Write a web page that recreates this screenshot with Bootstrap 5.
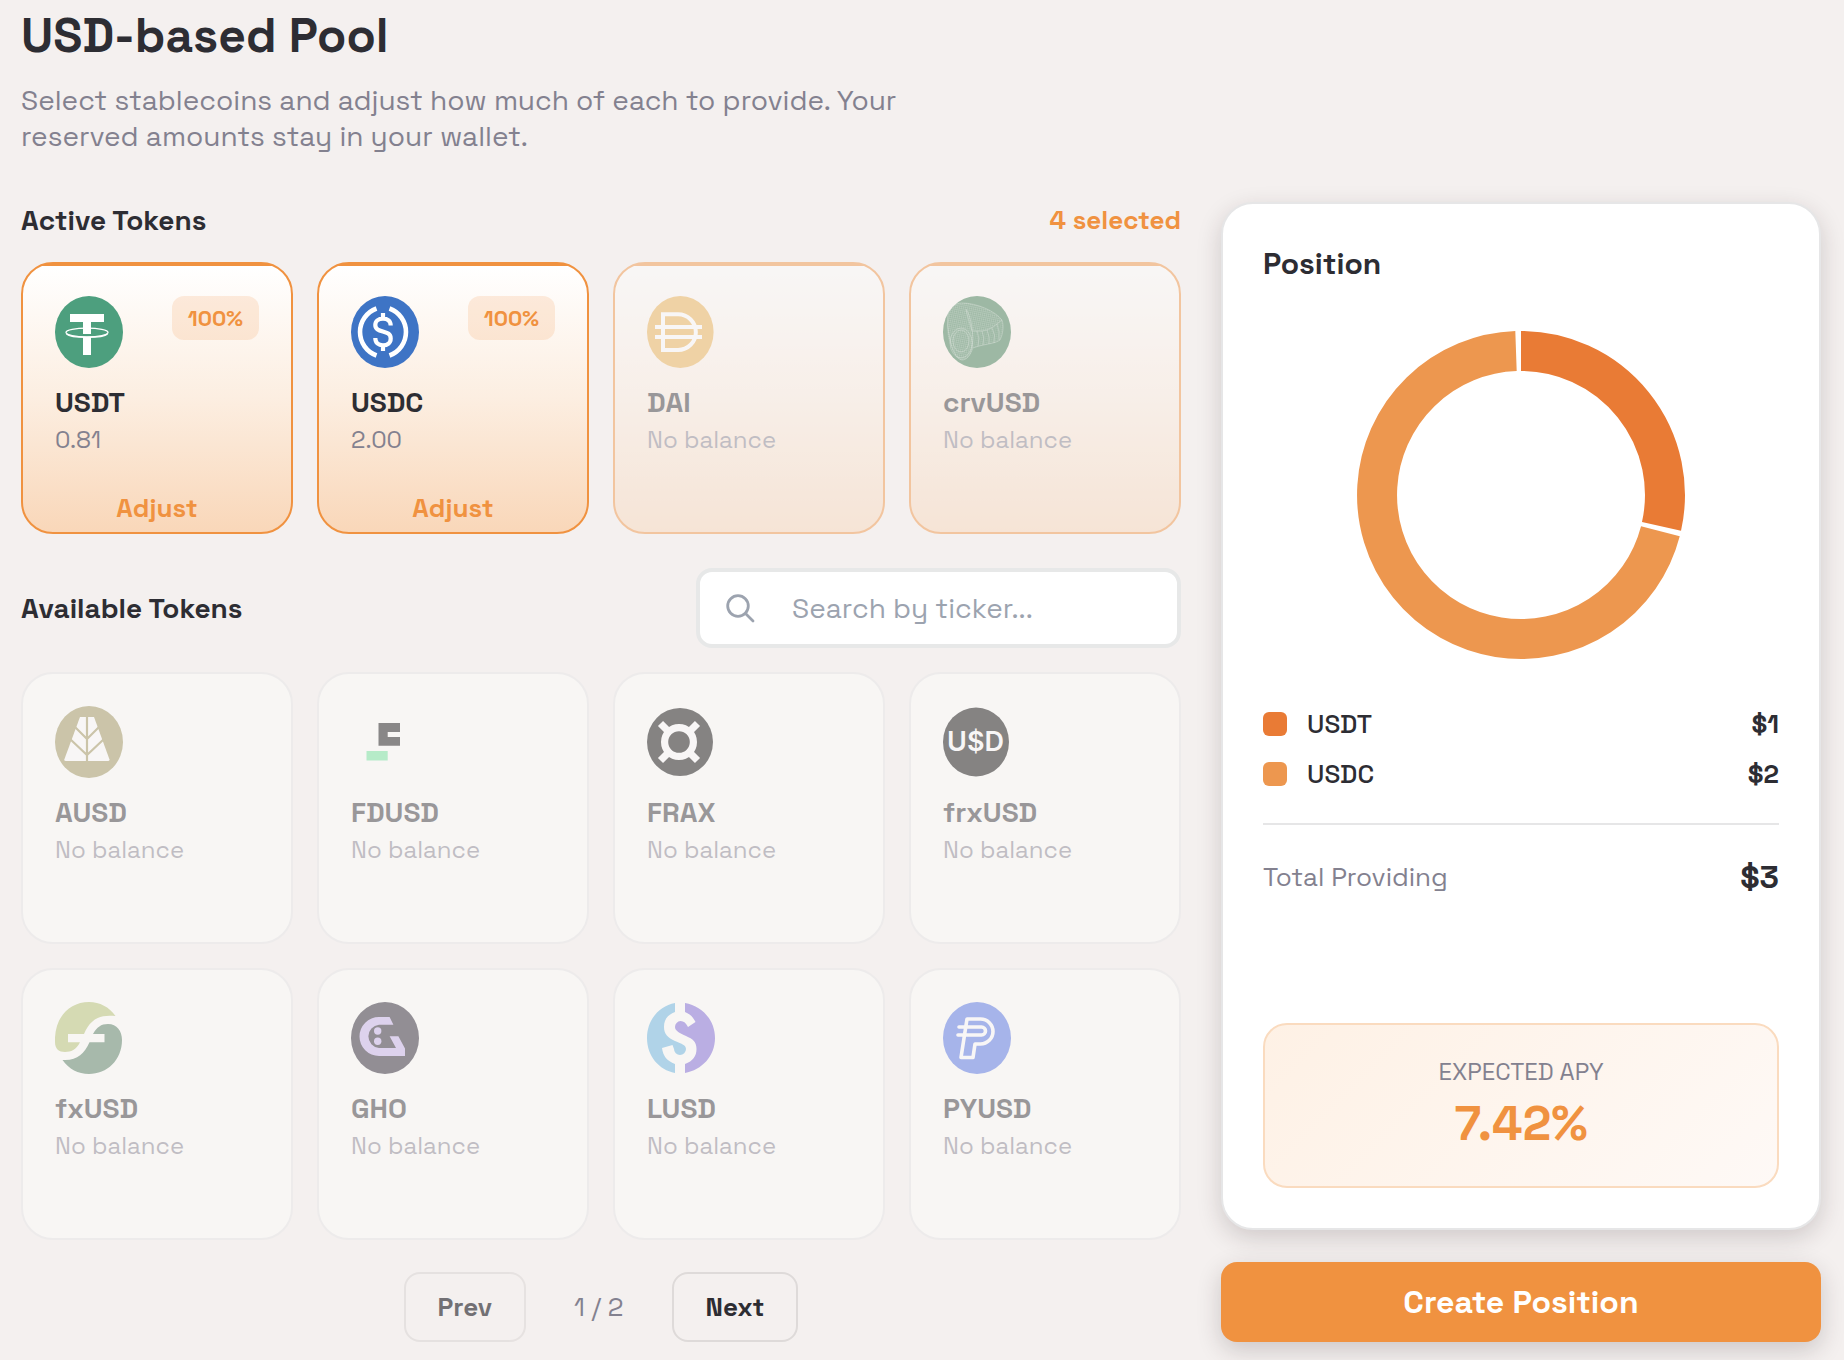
<!DOCTYPE html>
<html lang="en">
<head>
<meta charset="utf-8">
<meta name="viewport" content="width=device-width, initial-scale=1">
<title>USD-based Pool</title>
<link rel="stylesheet" href="https://cdn.jsdelivr.net/npm/bootstrap@5.3.0/dist/css/bootstrap.min.css">
<style>
:root{--ink:#2d2d33;--muted:#83818f;--accent:#f09240;--line:#e6e6e7}
body{background:#f4f0ef;color:var(--ink);font-family:"Space Grotesk",Inter,"Liberation Sans",sans-serif}
.page{padding:8px 23px 18px 21px}
.page-title{font-size:48px;line-height:56px;font-weight:700;margin-bottom:18px}
.intro{font-size:28px;line-height:36px;color:var(--muted);max-width:900px;margin-bottom:48px}
.layout{display:grid;grid-template-columns:minmax(0,1fr) minmax(0,600px);gap:40px}
.section-title{font-size:28px;line-height:36px;font-weight:600;margin:0}
.active-head{margin-bottom:24px}
.picked{font-size:26px;line-height:36px;font-weight:600;color:var(--accent)}
.tokens{display:grid;grid-template-columns:repeat(4,minmax(0,1fr));gap:24px}
.token{aspect-ratio:1;border:2px solid var(--line);border-radius:32px;background:#fdfffc;padding:32px 32px 6px;overflow:hidden}
.token.on{border-color:var(--accent);background:linear-gradient(var(--accent) 2px,#fff 2px,#fceee1 50%,#f9d7b9);background-origin:padding-box}
.token.off{opacity:.45}
.token-icon{width:68px;height:72px;display:block}
.pct{font-size:22px;line-height:44px;font-weight:600;color:var(--accent);background:rgba(240,146,64,.16);border-radius:12px;padding:0 16px}
.ticker{font-size:28px;line-height:36px;font-weight:600;margin:16px 0 4px}
.amount{font-size:24px;line-height:32px;color:var(--muted);margin:0}
.adjust{font-size:26px;line-height:36px;font-weight:700;color:var(--accent);background:none;border:0;padding:0}
.search-row{margin:34px 0 24px}
.search{width:485px;height:80px;border:4px solid #e7e8e8;border-radius:16px;background:#fff;padding-left:24px}
.search input{font-size:28px;color:var(--ink);background:none;padding:0 0 0 34px}
.search input::placeholder{color:#9ca3af;opacity:1}
.pager{margin-top:32px;gap:48px;font-size:26px;color:var(--muted)}
.pager button{height:70px;font-size:26px;font-weight:600;color:var(--ink);background:none;border:2px solid #dedad9;border-radius:16px;padding:0 32px}
.pager button:disabled{color:var(--ink);opacity:.65}
.panel{border:2px solid var(--line);border-radius:32px;background:#fff;padding:40px;box-shadow:0 8px 24px rgba(45,30,35,.18)}
.panel-title{font-size:30px;line-height:40px;font-weight:600;margin-bottom:31px}
.donut{width:360px;max-width:100%}
.legend{font-size:26px;line-height:32px;font-weight:500;margin:33px 0;display:grid;gap:18px}
.legend b{font-weight:600}
.swatch{width:24px;height:24px;border-radius:6px;margin-right:20px}
.swatch-a{background:#e97b35}
.swatch-b{background:#ed974f}
.total{border-top:2px solid var(--line);padding-top:32px;line-height:40px;font-size:26px;color:var(--muted)}
.total strong{font-size:32px;color:var(--ink)}
.apy{border:2px solid #fadbbf;border-radius:24px;background:linear-gradient(135deg,#fef1e5,#fef9f6);padding:33px 24px 34px}
.apy-label{font-size:24px;line-height:28px;color:var(--muted)}
.apy-value{font-size:48px;line-height:56px;font-weight:700;color:var(--accent);margin-top:10px}
.create{height:80px;margin-top:32px;border:0;border-radius:16px;background:var(--accent);color:#fff;font-size:32px;font-weight:600;box-shadow:0 8px 24px rgba(45,30,35,.2)}
@media (max-width:1399px){.layout{grid-template-columns:minmax(0,1fr)}}
@media (max-width:1100px){.tokens{grid-template-columns:repeat(2,minmax(0,1fr))}}
</style>
</head>
<body>
<main class="page">
  <h1 class="page-title">USD-based Pool</h1>
  <p class="intro">Select stablecoins and adjust how much of each to provide. Your reserved amounts stay in your wallet.</p>
  <div class="layout">
    <section>
      <div class="active-head d-flex justify-content-between align-items-center">
        <h2 class="section-title">Active Tokens</h2>
        <span class="picked">4 selected</span>
      </div>
      <div class="tokens">
        <article class="token on d-flex flex-column">
          <div class="d-flex justify-content-between align-items-start">
            <svg class="token-icon" viewBox="0 0 68 72" aria-hidden="true"><ellipse cx="34" cy="36" rx="34" ry="36" fill="#4d9f7e"/><path d="M15 18H49V26H36V38H28V26H15ZM28 41H36V59H28Z" fill="#fff"/><ellipse cx="32" cy="36.5" rx="21" ry="4.3" fill="none" stroke="#fff" stroke-width="1.3"/><path d="M11.5 38C16 42.500 48 42.500 52.500 38" fill="none" stroke="#fff" stroke-width="1.400"/></svg>
            <span class="pct">100%</span>
          </div>
          <h3 class="ticker">USDT</h3><p class="amount">0.81</p>
          <button class="adjust mt-auto align-self-center" type="button">Adjust</button>
        </article>
        <article class="token on d-flex flex-column">
          <div class="d-flex justify-content-between align-items-start">
            <svg class="token-icon" viewBox="0 0 68 72" aria-hidden="true"><ellipse cx="34" cy="36" rx="34" ry="36" fill="#3e74c5"/><g fill="none" stroke="#fff" stroke-width="4.600"><path d="M25.500 12.500A25 25 0 0 0 25.500 59.500M38.500 12.500A25 25 0 0 1 38.500 59.500"/><path d="M39.700 29.500C39.700 25 36.500 22.700 32 22.700S24.300 25 24.300 29C24.300 38 39.700 33 39.700 42.500C39.700 47 36.500 49.300 32 49.300S24.300 47 24.300 42M32 17V23M32 49V55" stroke-width="4.200"/></g></svg>
            <span class="pct">100%</span>
          </div>
          <h3 class="ticker">USDC</h3><p class="amount">2.00</p>
          <button class="adjust mt-auto align-self-center" type="button">Adjust</button>
        </article>
        <article class="token on off">
          <svg class="token-icon" viewBox="0 0 68 72" aria-hidden="true"><ellipse cx="33.300" cy="36" rx="33.300" ry="36" fill="#ebae4c"/><path d="M16 18.300H31A17.700 17.700 0 0 1 31 54H16ZM8 31H55M8 41H55" fill="none" stroke="#fff" stroke-width="4"/></svg>
          <h3 class="ticker">DAI</h3><p class="amount">No balance</p>
        </article>
        <article class="token on off">
          <svg class="token-icon" viewBox="0 0 68 72" aria-hidden="true">
            <defs><pattern id="mesh" width="2" height="2" patternUnits="userSpaceOnUse" patternTransform="rotate(12)"><path d="M0 0H2M0 0V2" stroke="#fff" stroke-width=".5" stroke-opacity=".6"/></pattern></defs>
            <ellipse cx="34" cy="36" rx="34" ry="36" fill="#35764b"/>
            <path d="M5 18C8 10 13 7 19 7C34 7 52 15 59 24C61 30 60 38 57 44C52 48 40 48 30 52C28 59 24 64 19 64C12 64 5 48 4 32Z" fill="url(#mesh)"/>
            <path d="M30 35C42 36 48 33 54 28L59 24C61 30 60 38 57 44C52 48 40 48 30 52Z" fill="#35764b" fill-opacity=".4"/>
            <g fill="none" stroke="#fff" stroke-opacity=".4" stroke-width=".7"><path d="M5 18C8 10 13 7 19 7C34 7 52 15 59 24C61 30 60 38 57 44C52 48 40 48 30 52"/><path d="M23 13C29 22 31 40 29 54C26 62 22 64 19 64C11 63 3 40 5 18"/><ellipse cx="18" cy="47" rx="11" ry="15"/><ellipse cx="18" cy="45" rx="8" ry="11"/><path d="M23 14C25 22 27 28 29 35M30 35C42 36 48 33 54 28L59 24M34 35Q37 42 35 50M39 35Q42 42 40 49M44 34Q47 41 46 48M49 32Q53 39 51 47M54 28Q57 36 56 44"/></g>
          </svg>
          <h3 class="ticker">crvUSD</h3><p class="amount">No balance</p>
        </article>
      </div>

      <div class="search-row d-flex justify-content-between align-items-center flex-wrap">
        <h2 class="section-title">Available Tokens</h2>
        <div class="search d-flex align-items-center">
          <label for="ticker-search" class="d-flex" aria-label="Search by ticker"><svg width="34" height="34" viewBox="0 0 34 34" fill="none" stroke="#9ca3af" stroke-width="2.800" stroke-linecap="round"><circle cx="14" cy="15" r="10.300"/><path d="M21.500 22.500L29 30"/></svg></label>
          <input id="ticker-search" class="form-control border-0 shadow-none h-100" type="text" placeholder="Search by ticker...">
        </div>
      </div>

      <div class="tokens">
        <article class="token off">
          <svg class="token-icon" viewBox="0 0 68 72" aria-hidden="true"><ellipse cx="34" cy="36" rx="34" ry="36" fill="#9a9056"/><path d="M25 11H39L54.500 53.500Q54.500 55 53 55H11Q9 55 9.300 53.500Z" fill="#fff"/><path d="M32 10V56M19 20L32 33L45 20M15 33L32 49L49 33" fill="none" stroke="#9a9056" stroke-width="2.200"/></svg>
          <h3 class="ticker">AUSD</h3><p class="amount">No balance</p>
        </article>
        <article class="token off">
          <svg class="token-icon" viewBox="0 0 68 72" aria-hidden="true"><path d="M27.500 17H49V26H36.700V31H49V39.700H27.500Z" fill="#0a0a0a"/><path d="M15.500 45H36.700V54.500H15.500Z" fill="#6ce59b"/></svg>
          <h3 class="ticker">FDUSD</h3><p class="amount">No balance</p>
        </article>
        <article class="token off">
          <svg class="token-icon" viewBox="0 0 68 72" aria-hidden="true"><ellipse cx="33" cy="36" rx="33" ry="34" fill="#000"/><g fill="none" stroke="#fff" stroke-width="7.200"><circle cx="32" cy="36" r="14.400"/><path d="M13.500 17.500L21 25M50.500 17.500L43 25M13.500 54.500L21 47M50.500 54.500L43 47"/></g></svg>
          <h3 class="ticker">FRAX</h3><p class="amount">No balance</p>
        </article>
        <article class="token off">
          <svg class="token-icon" viewBox="0 0 68 72" aria-hidden="true"><ellipse cx="33" cy="36" rx="33" ry="34.500" fill="#000"/><text x="32.500" y="45" text-anchor="middle" font-family="Inter,sans-serif" font-size="27" font-weight="600" fill="#fff">U$D</text></svg>
          <h3 class="ticker">frxUSD</h3><p class="amount">No balance</p>
        </article>
        <article class="token off">
          <svg class="token-icon" viewBox="0 0 68 72" aria-hidden="true"><path d="M0 40C-1 16 14 0 34 0C45 0 54 5 60.500 14C44 12 35 18 29 32H13V40.300H25C21 48 16 50 10 50C4 50 0 47 0 40Z" fill="#b1c06c"/><path d="M7.500 58C22 59 29 52 34.500 40.300H49.500V32H38C42 25 46 22 53 22C62 22 67 29 67 38C67 58 52 72 34 72C23 72 14 67 7.500 58Z" fill="#4b775a"/></svg>
          <h3 class="ticker">fxUSD</h3><p class="amount">No balance</p>
        </article>
        <article class="token off">
          <svg class="token-icon" viewBox="0 0 68 72" aria-hidden="true"><ellipse cx="34" cy="36" rx="34" ry="36" fill="#1c1827"/><g fill="#c3aeeb"><path d="M38.600 15H28A19.500 19.500 0 0 0 28 54H54V46.500L47.400 34.300H38.600L45 46H28A11.700 11.700 0 0 1 28 22.700H42.400Z"/><circle cx="26.700" cy="29" r="3.700"/><circle cx="26.700" cy="39.300" r="3.700"/></g></svg>
          <h3 class="ticker">GHO</h3><p class="amount">No balance</p>
        </article>
        <article class="token off">
          <svg class="token-icon" viewBox="0 0 68 72" aria-hidden="true"><path d="M28 1V10C20 13 17 18 17 25C17 32 21 36 28 39C35 42 39 43 39 47A5.800 5.800 0 0 1 27 47L25.500 43L15 46C16 54 20 59 28 62V71C12 68 0 54 0 36S12 4 28 1Z" fill="#5fb2e0"/><path d="M38 1V10C43 12 46 15 48.500 20L41 25C39 21 37 19 33.500 19A6 6 0 0 0 28 25C28 29 33 31 39 34C46 37 49.500 40 49.500 47C49.500 54 46 59 38 62V71C55 68 68 54 68 36S55 4 38 1Z" fill="#7560d5"/></svg>
          <h3 class="ticker">LUSD</h3><p class="amount">No balance</p>
        </article>
        <article class="token off">
          <svg class="token-icon" viewBox="0 0 68 72" aria-hidden="true"><ellipse cx="34" cy="36" rx="34" ry="36" fill="#4a6ce4"/><path d="M24 17H37.500A12.500 12.500 0 0 1 37.500 42H32L30 55.500H18ZM16 25H38.500A4 4 0 0 1 38.500 33H15" fill="none" stroke="#fff" stroke-width="3.600" stroke-linecap="round" stroke-linejoin="round"/></svg>
          <h3 class="ticker">PYUSD</h3><p class="amount">No balance</p>
        </article>
      </div>

      <nav class="pager d-flex justify-content-center align-items-center" aria-label="Token pages">
        <button type="button" disabled>Prev</button>
        <span>1 / 2</span>
        <button type="button">Next</button>
      </nav>
    </section>

    <aside class="d-flex flex-column">
      <div class="panel d-flex flex-column flex-grow-1">
        <h2 class="panel-title">Position</h2>
        <svg class="donut mx-auto d-block" viewBox="-180 -180 360 360" role="img" aria-label="Position split between USDT and USDC" fill="none" stroke-width="40">
          <path d="M0 -144A144 144 0 0 1 140.500 31.400" stroke="#e97b35"/>
          <path d="M139.400 36.300A144 144 0 1 1 -5 -143.900" stroke="#ed974f"/>
        </svg>
        <div class="legend">
          <div class="d-flex align-items-center"><span class="swatch swatch-a"></span><span>USDT</span><b class="ms-auto">$1</b></div>
          <div class="d-flex align-items-center"><span class="swatch swatch-b"></span><span>USDC</span><b class="ms-auto">$2</b></div>
        </div>
        <div class="total d-flex justify-content-between align-items-center"><span>Total Providing</span><strong>$3</strong></div>
        <div class="apy mt-auto text-center">
          <div class="apy-label">EXPECTED APY</div>
          <div class="apy-value">7.42%</div>
        </div>
      </div>
      <button class="create w-100" type="button">Create Position</button>
    </aside>
  </div>
</main>
<script src="https://cdn.jsdelivr.net/npm/bootstrap@5.3.0/dist/js/bootstrap.bundle.min.js"></script>
</body>
</html>
